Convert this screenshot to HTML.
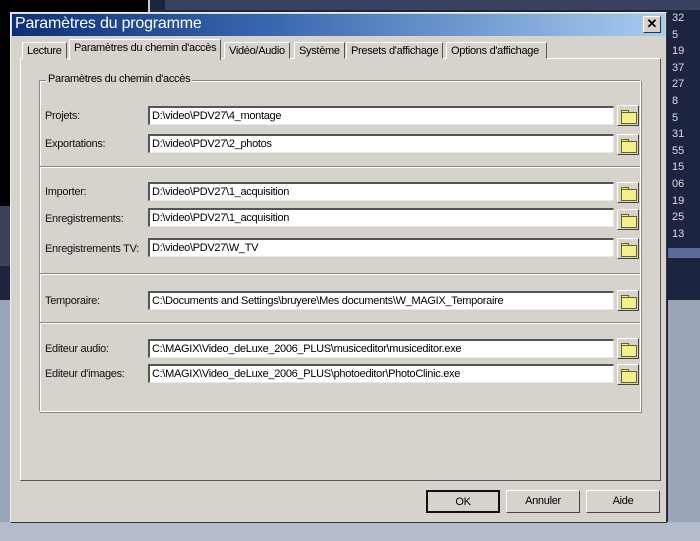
<!DOCTYPE html>
<html><head><meta charset="utf-8"><style>
*{margin:0;padding:0;box-sizing:border-box}
body{width:700px;height:541px;position:relative;overflow:hidden;background:#1c2440;font-family:"Liberation Sans",sans-serif;font-size:11px;color:#000}
.a{position:absolute}
.lbl{position:absolute;left:45px;letter-spacing:-0.3px;color:#111}
.fld{position:absolute;left:148px;width:466px;height:19px;background:#fff;border-top:2px solid #555;border-left:2px solid #555;border-right:1px solid #e8e8e8;border-bottom:1px solid #e8e8e8;padding:0 2px;line-height:16px;letter-spacing:-0.3px;white-space:nowrap}
.fb{position:absolute;left:617px;width:22px;height:21px;background:#d6d3cc;border:1px solid;border-color:#fff #444 #444 #fff}
.fb:after{content:"";position:absolute;left:3px;top:6px;width:14px;height:10px;background:#f4ee8c;border:1px solid #6a6020}
.fb:before{content:"";position:absolute;left:3px;top:4px;width:6px;height:3px;background:#f4ee8c;border:1px solid #6a6020;border-bottom:none}
.sep{position:absolute;left:40px;width:600px;height:2px;border-top:1px solid #888;border-bottom:1px solid #fff}
.tab{position:absolute;top:40px;height:19px;border:1px solid;border-color:#fff #555 transparent #fff;background:#d6d3cc;padding:2px 4px;letter-spacing:-0.3px;white-space:nowrap}
.btn{position:absolute;top:490px;height:23px;background:#d6d3cc;border:1px solid;border-color:#fff #444 #444 #fff;text-align:center;line-height:20px;letter-spacing:-0.3px}
</style></head><body>
<div class="a" style="left:0;top:0;width:148px;height:206px;background:#000"></div>
<div class="a" style="left:148px;top:0;width:2px;height:206px;background:#ccc"></div>
<div class="a" style="left:165px;top:0;width:535px;height:10px;background:#3a4262"></div>
<div class="a" style="left:0;top:206px;width:12px;height:60px;background:#3a4258"></div>
<div class="a" style="left:0;top:300px;width:12px;height:241px;background:#9aa6b8"></div>
<div class="a" style="left:668px;top:248px;width:32px;height:10px;background:#5a6a98"></div>
<div class="a" style="left:668px;top:300px;width:32px;height:241px;background:#9aa6b8"></div>
<div class="a" style="left:0;top:522px;width:700px;height:19px;background:#b4bccb"></div>
<div class="a" style="left:672px;top:10px;color:#ddd;line-height:16.6px;font-size:11px">32<br>5<br>19<br>37<br>27<br>8<br>5<br>31<br>55<br>15<br>06<br>19<br>25<br>13</div>

<div class="a" style="left:10px;top:12px;width:657px;height:511px;background:#d6d3cc;border:1px solid;border-color:#eee #333 #333 #eee"></div>
<div class="a" style="left:12px;top:14px;width:653px;height:22px;background:linear-gradient(90deg,#0c3078,#3a68b0 40%,#a8ccf0)"></div>
<div class="a" style="left:15px;top:15px;color:#fff;font-size:16px;letter-spacing:-0.2px">Paramètres du programme</div>
<div class="a" style="left:643px;top:16px;width:18px;height:17px;background:#d6d3cc;border:1px solid;border-color:#fff #333 #333 #fff;text-align:center;font-weight:bold;font-size:13px;line-height:14px">✕</div>

<div class="a" style="left:20px;top:58px;width:641px;height:423px;border:1px solid;border-color:#fff #555 #555 #fff"></div>
<div class="tab" style="left:22px;top:42px;height:17px">Lecture</div>
<div class="tab" style="left:69px;top:39px;height:21px;border-bottom:none;z-index:2">Paramètres du chemin d'accès</div>
<div class="tab" style="left:224px;top:42px;height:17px">Vidéo/Audio</div>
<div class="tab" style="left:294px;top:42px;height:17px">Système</div>
<div class="tab" style="left:346px;top:42px;height:17px">Presets d'affichage</div>
<div class="tab" style="left:446px;top:42px;height:17px;padding-right:7px">Options d'affichage</div>

<div class="a" style="left:39px;top:80px;width:602px;height:332px;border:1px solid;border-color:#888 #fff #fff #888;box-shadow:inset 1px 1px #fff,1px 1px #888"></div>
<div class="a" style="left:46px;top:73px;background:#d6d3cc;padding:0 2px;letter-spacing:-0.3px">Paramètres du chemin d'accès</div>

<div class="lbl" style="top:110px">Projets:</div><div class="fld" style="top:106px">D:\video\PDV27\4_montage</div><div class="fb" style="top:105px"></div>
<div class="lbl" style="top:138px">Exportations:</div><div class="fld" style="top:134px">D:\video\PDV27\2_photos</div><div class="fb" style="top:134px"></div>
<div class="sep" style="top:166px"></div>
<div class="lbl" style="top:186px">Importer:</div><div class="fld" style="top:182px">D:\video\PDV27\1_acquisition</div><div class="fb" style="top:182px"></div>
<div class="lbl" style="top:213px">Enregistrements:</div><div class="fld" style="top:208px">D:\video\PDV27\1_acquisition</div><div class="fb" style="top:209px"></div>
<div class="lbl" style="top:243px">Enregistrements TV:</div><div class="fld" style="top:238px">D:\video\PDV27\W_TV</div><div class="fb" style="top:238px"></div>
<div class="sep" style="top:273px"></div>
<div class="lbl" style="top:295px">Temporaire:</div><div class="fld" style="top:291px">C:\Documents and Settings\bruyere\Mes documents\W_MAGIX_Temporaire</div><div class="fb" style="top:290px"></div>
<div class="sep" style="top:322px"></div>
<div class="lbl" style="top:343px">Editeur audio:</div><div class="fld" style="top:339px">C:\MAGIX\Video_deLuxe_2006_PLUS\musiceditor\musiceditor.exe</div><div class="fb" style="top:338px"></div>
<div class="lbl" style="top:368px">Editeur d'images:</div><div class="fld" style="top:364px">C:\MAGIX\Video_deLuxe_2006_PLUS\photoeditor\PhotoClinic.exe</div><div class="fb" style="top:364px"></div>

<div class="btn" style="left:426px;width:74px;border:2px solid #111">OK</div>
<div class="btn" style="left:506px;width:74px">Annuler</div>
<div class="btn" style="left:586px;width:74px">Aide</div>
</body></html>
